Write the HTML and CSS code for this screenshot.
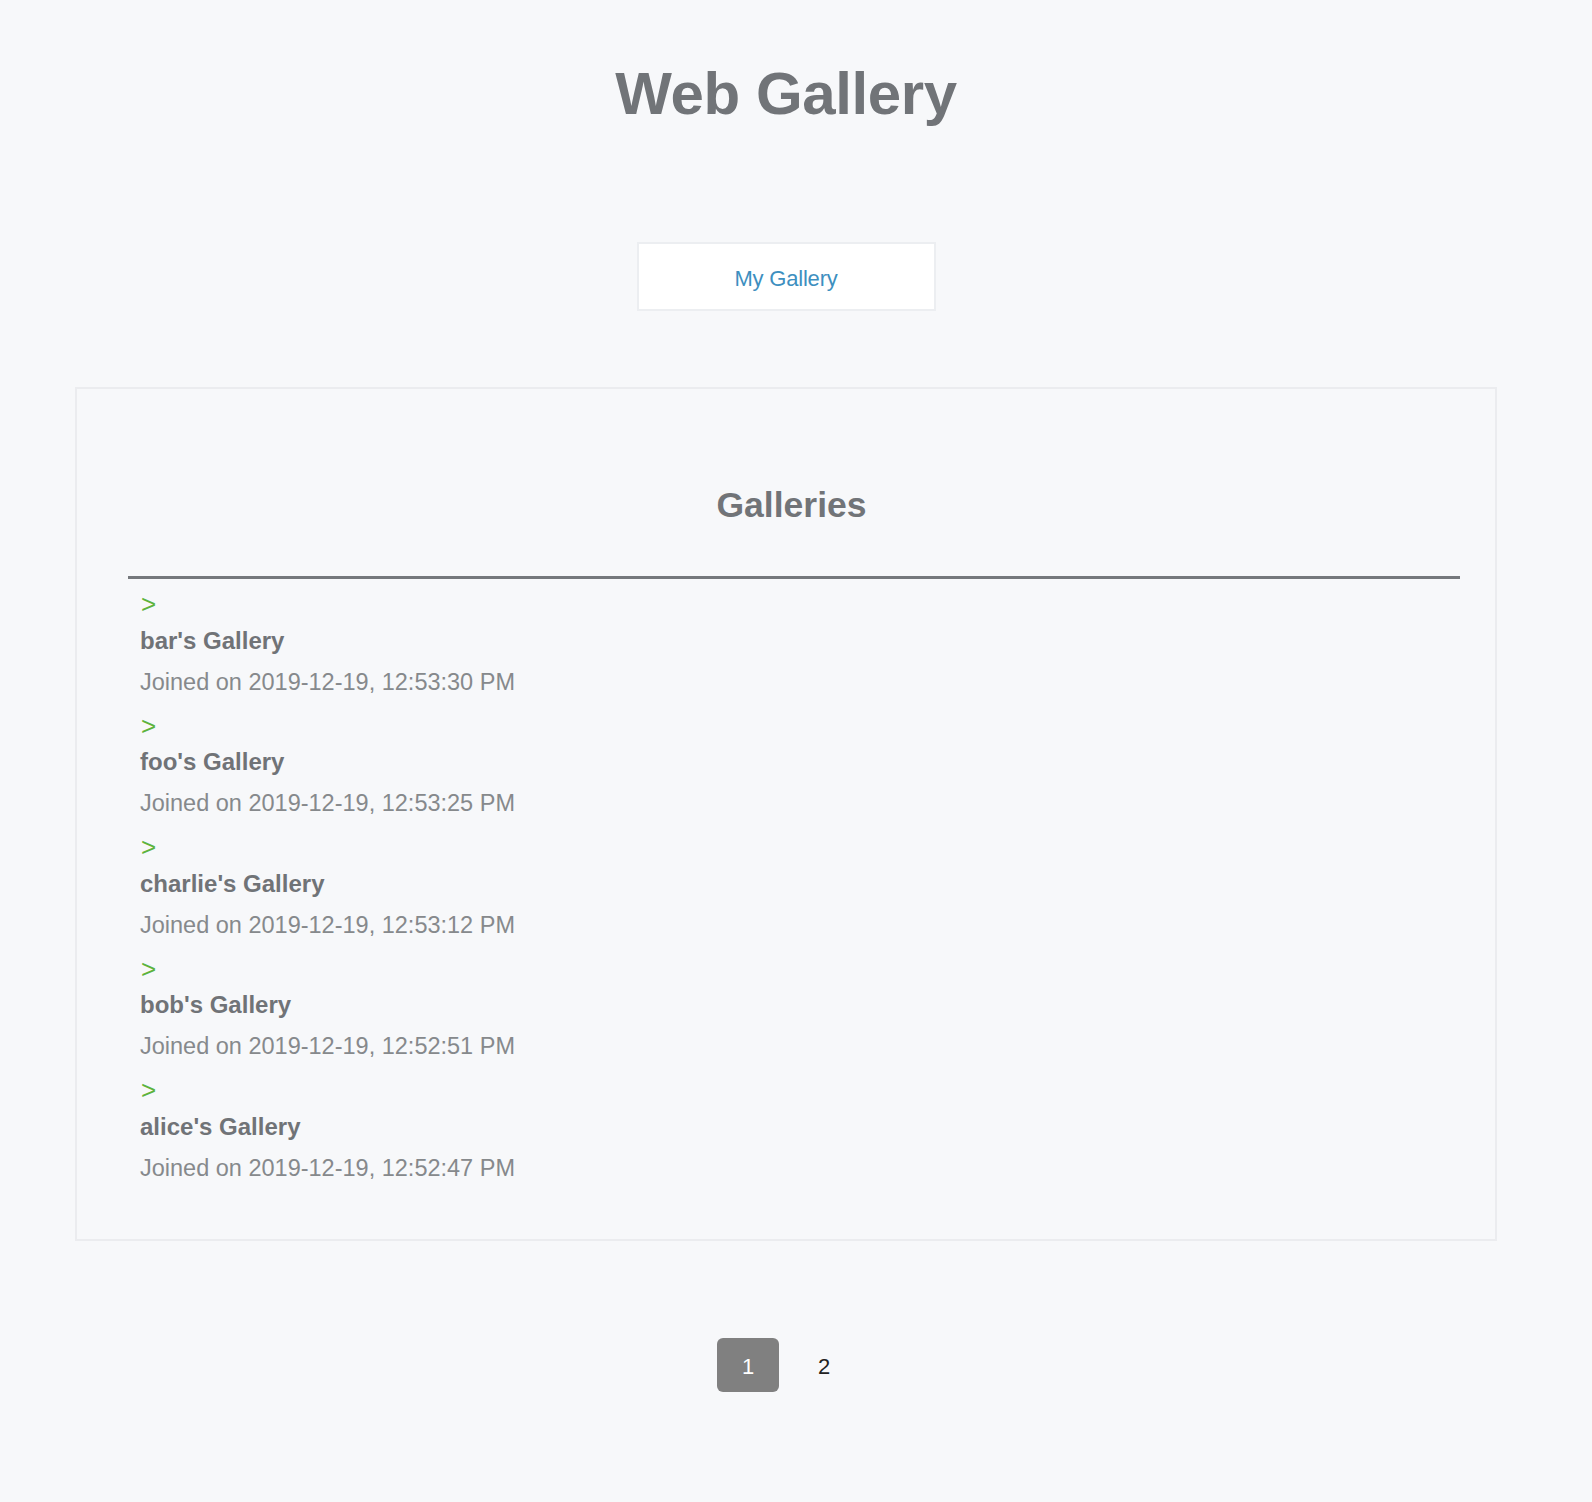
FILE: index.html
```html
<!DOCTYPE html>
<html lang="en">
<head>
<meta charset="utf-8">
<title>Web Gallery</title>
<link rel="stylesheet" href="styles.css">
</head>
<body>
<div class="page">
  <h1 class="title">Web Gallery</h1>
  <a class="my-gallery" href="#">My Gallery</a>
  <section class="card">
    <h2 class="card-title">Galleries</h2>
    <div class="rule"></div>
    <ul class="list">
      <li class="item">
        <div class="arrow">&gt;</div>
        <div class="name">bar's Gallery</div>
        <div class="joined">Joined on 2019-12-19, 12:53:30 PM</div>
      </li>
      <li class="item">
        <div class="arrow">&gt;</div>
        <div class="name">foo's Gallery</div>
        <div class="joined">Joined on 2019-12-19, 12:53:25 PM</div>
      </li>
      <li class="item">
        <div class="arrow">&gt;</div>
        <div class="name">charlie's Gallery</div>
        <div class="joined">Joined on 2019-12-19, 12:53:12 PM</div>
      </li>
      <li class="item">
        <div class="arrow">&gt;</div>
        <div class="name">bob's Gallery</div>
        <div class="joined">Joined on 2019-12-19, 12:52:51 PM</div>
      </li>
      <li class="item">
        <div class="arrow">&gt;</div>
        <div class="name">alice's Gallery</div>
        <div class="joined">Joined on 2019-12-19, 12:52:47 PM</div>
      </li>
    </ul>
  </section>
  <nav class="pager">
    <span class="page-btn active">1</span>
    <span class="page-btn">2</span>
  </nav>
</div>
</body>
</html>
```

FILE: styles.css
```css
html, body {
  margin: 0;
  padding: 0;
  background: #f7f8fa;
}

body {
  font-family: "Liberation Sans", Arial, Helvetica, sans-serif;
  color: #222;
}

.page {
  width: 1572px;
  padding-top: 59px;
  padding-bottom: 110px;
  display: flex;
  flex-direction: column;
  align-items: center;
}

.title {
  margin: 0;
  font-size: 60px;
  line-height: 70px;
  font-weight: 700;
  color: #717478;
  letter-spacing: -0.4px;
}

.my-gallery {
  display: block;
  box-sizing: border-box;
  width: 299px;
  margin-top: 113px;
  padding: 20px 0 15px;
  line-height: 30px;
  font-size: 22px;
  text-align: center;
  color: #3d8fbf;
  text-decoration: none;
  background: #ffffff;
  border: 2px solid #eceef1;
  letter-spacing: -0.2px;
}

.card {
  box-sizing: border-box;
  align-self: flex-start;
  margin-left: 75px;
  margin-top: 76px;
  width: 1422px;
  padding: 96px 35px 50px 51px;
  border: 2px solid #ebecef;
  background: #f7f8fa;
}

.card-title {
  margin: 0;
  padding-right: 5px;
  font-size: 35.5px;
  line-height: 40px;
  font-weight: 700;
  text-align: center;
  color: #717478;
}

.rule {
  margin-top: 51px;
  height: 3px;
  background: #75787c;
}

.list {
  list-style: none;
  margin: 0;
  padding: 10px 0 0 12px;
}

.item {
  margin-bottom: 8px;
}

.item:last-child {
  margin-bottom: 0;
}

.arrow {
  font-size: 26px;
  line-height: 31.5px;
  padding-left: 1px;
  color: #5db33c;
}

.name {
  font-size: 24px;
  line-height: 40px;
  font-weight: 700;
  color: #707377;
}

.joined {
  font-size: 23.5px;
  line-height: 42px;
  color: #86898c;
}

.pager {
  margin-top: 97px;
  display: flex;
  gap: 14px;
}

.page-btn {
  box-sizing: border-box;
  width: 62px;
  height: 54px;
  padding-top: 3px;
  border-radius: 6px;
  font-size: 22px;
  line-height: 51px;
  text-align: center;
  color: #222;
}

.page-btn.active {
  background: #808080;
  color: #ffffff;
}
```
